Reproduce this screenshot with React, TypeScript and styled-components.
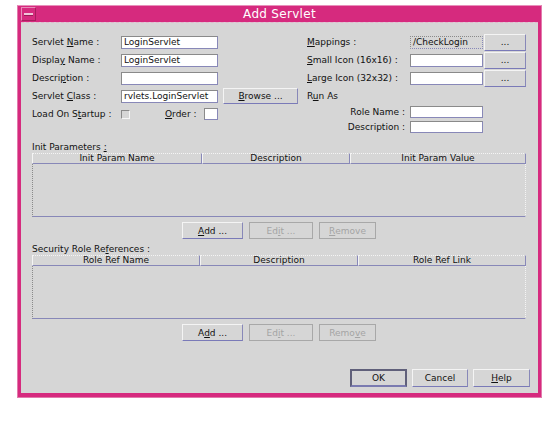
import React from "react";
import styled, { createGlobalStyle } from "styled-components";

const GlobalStyle = createGlobalStyle`
  html, body {
    margin: 0;
    padding: 0;
    background: #ffffff;
  }
  body {
    font-family: "DejaVu Sans", "Liberation Sans", sans-serif;
    color: #111111;
  }
`;

const Page = styled.div`
  padding: 5px 0 0 17px;
`;

const Frame = styled.div`
  width: 525px;
  box-sizing: border-box;
  background: #d62a7e;
  border: 1px solid #e27aac;
  border-top-color: #e890bb;
  padding: 0 3px 4px 3px;
`;

const TitleBar = styled.div`
  height: 16px;
  display: grid;
  grid-template-columns: 15px 1fr 15px;
  align-items: center;
`;

const MenuButton = styled.div`
  width: 15px;
  height: 14px;
  box-sizing: border-box;
  border: 1px solid #e88ab8;
  border-right-color: #a81e5e;
  border-bottom-color: #a81e5e;
  display: flex;
  align-items: center;
  justify-content: center;
  &::after {
    content: "";
    width: 9px;
    height: 2px;
    background: #f2c4da;
    border-bottom: 1px solid #9a1c56;
  }
`;

const Title = styled.div`
  text-align: center;
  color: #ffffff;
  font-size: 12px;
  line-height: 16px;
  letter-spacing: 0.3px;
`;

const Body = styled.div`
  height: 371px;
  box-sizing: border-box;
  background: #d6d6d6;
  border-top: 1px dashed #e4b6cc;
  padding: 10px 12px 0 11px;
  display: flex;
  flex-direction: column;
  font-size: 9px;
`;

const Top = styled.div`
  display: flex;
  gap: 9px;
`;

const Column = styled.div<{ $w: number }>`
  width: ${(p) => p.$w}px;
  display: flex;
  flex-direction: column;
`;

const Row = styled.div<{ $h?: number }>`
  height: ${(p) => p.$h ?? 18}px;
  display: flex;
  align-items: center;
`;

const Label = styled.span<{ $w?: number; $right?: boolean }>`
  width: ${(p) => (p.$w ? `${p.$w}px` : "auto")};
  flex-shrink: 0;
  text-align: ${(p) => (p.$right ? "right" : "left")};
  padding-right: ${(p) => (p.$right ? "5px" : "0")};
  box-sizing: border-box;
  white-space: nowrap;
  line-height: 12px;
`;

const Mn = styled.u`
  text-decoration: underline;
  text-underline-offset: 1px;
`;

const Field = styled.div<{ $w: number; $h?: number; $readOnly?: boolean }>`
  width: ${(p) => p.$w}px;
  height: ${(p) => p.$h ?? 13}px;
  box-sizing: border-box;
  flex-shrink: 0;
  background: ${(p) => (p.$readOnly ? "#d6d6d6" : "#ffffff")};
  border: 1px ${(p) => (p.$readOnly ? "dotted" : "solid")} #8888b8;
  border-top-color: #8a8a8a;
  border-left-color: #8a8a8a;
  padding-left: 2px;
  font-size: 9px;
  line-height: 11px;
  white-space: nowrap;
  overflow: hidden;
`;

const CheckBox = styled.div`
  width: 9px;
  height: 9px;
  box-sizing: border-box;
  border: 1px solid #f6f6f6;
  border-top-color: #8a8a8a;
  border-left-color: #8a8a8a;
  background: #d6d6d6;
  flex-shrink: 0;
`;

const Button = styled.div<{
  $w: number;
  $h?: number;
  $disabled?: boolean;
  $default?: boolean;
}>`
  width: ${(p) => p.$w}px;
  height: ${(p) => p.$h ?? 17}px;
  box-sizing: border-box;
  flex-shrink: 0;
  display: flex;
  align-items: center;
  justify-content: center;
  background: #d6d6d6;
  font-size: 9px;
  color: ${(p) => (p.$disabled ? "#a4a4a4" : "#111111")};
  border: ${(p) => (p.$default ? "2px" : "1px")} solid;
  border-color: ${(p) =>
    p.$disabled
      ? "#a8a8a8"
      : p.$default
      ? "#60607a #60607a #7a7ab0 #60607a"
      : "#f4f4f4 #8888b8 #7a7ab8 #f4f4f4"};
  white-space: nowrap;
`;

const SectionLabel = styled.div<{ $mt: number }>`
  margin-top: ${(p) => p.$mt}px;
  height: 12px;
  line-height: 12px;
`;

const Table = styled.div`
  display: flex;
  flex-direction: column;
`;

const HeaderRow = styled.div<{ $cols: string }>`
  display: grid;
  grid-template-columns: ${(p) => p.$cols};
  height: 11px;
`;

const HeaderCell = styled.div`
  box-sizing: border-box;
  border: 1px solid #8888b8;
  border-top: 1px dotted #f4f4f4;
  border-left-color: #f4f4f4;
  text-align: center;
  font-size: 9px;
  line-height: 9px;
  white-space: nowrap;
  overflow: hidden;
`;

const TableBody = styled.div`
  height: 53px;
  box-sizing: border-box;
  border-left: 1px dotted #8a8a8a;
  border-right: 1px dotted #f4f4f4;
  border-bottom: 1px solid #8888b8;
`;

const ButtonRow = styled.div<{ $mt: number; $end?: boolean }>`
  margin-top: ${(p) => p.$mt}px;
  display: flex;
  justify-content: ${(p) => (p.$end ? "flex-end" : "center")};
  gap: ${(p) => (p.$end ? 5 : 6)}px;
  margin-right: ${(p) => (p.$end ? -4 : 0)}px;
`;

type Col = { title: React.ReactNode };

function ListSection({
  label,
  cols,
  columns,
  labelTop,
  add,
  edit,
  remove,
}: {
  label: React.ReactNode;
  cols: string;
  columns: Col[];
  labelTop: number;
  add: React.ReactNode;
  edit: React.ReactNode;
  remove: React.ReactNode;
}) {
  return (
    <>
      <SectionLabel $mt={labelTop}>{label}</SectionLabel>
      <Table>
        <HeaderRow $cols={cols}>
          {columns.map((c, i) => (
            <HeaderCell key={i}>{c.title}</HeaderCell>
          ))}
        </HeaderRow>
        <TableBody />
      </Table>
      <ButtonRow $mt={5}>
        <Button $w={61}>{add}</Button>
        <Button $w={64} $disabled>
          {edit}
        </Button>
        <Button $w={57} $disabled>
          {remove}
        </Button>
      </ButtonRow>
    </>
  );
}

export default function App() {
  return (
    <Page>
      <GlobalStyle />
      <Frame>
        <TitleBar>
          <MenuButton />
          <Title>Add Servlet</Title>
          <span />
        </TitleBar>
        <Body>
          <Top>
            <Column $w={266}>
              <Row>
                <Label $w={89}>
                  Servlet <Mn>N</Mn>ame :
                </Label>
                <Field $w={97}>LoginServlet</Field>
              </Row>
              <Row>
                <Label $w={89}>
                  Displa<Mn>y</Mn> Name :
                </Label>
                <Field $w={97}>LoginServlet</Field>
              </Row>
              <Row>
                <Label $w={89}>
                  Descri<Mn>p</Mn>tion :
                </Label>
                <Field $w={97} />
              </Row>
              <Row>
                <Label $w={89}>
                  Servlet <Mn>C</Mn>lass :
                </Label>
                <Field $w={97}>rvlets.LoginServlet</Field>
                <Button $w={75} $h={16} style={{ marginLeft: 5 }}>
                  <Mn>B</Mn>rowse ...
                </Button>
              </Row>
              <Row>
                <Label $w={89}>
                  Load On S<Mn>t</Mn>artup :
                </Label>
                <CheckBox />
                <Label $w={39} style={{ marginLeft: 35 }}>
                  <Mn>O</Mn>rder :
                </Label>
                <Field $w={14} $h={12} />
              </Row>
            </Column>
            <Column $w={219}>
              <Row>
                <Label $w={103}>
                  <Mn>M</Mn>appings :
                </Label>
                <Field $w={73} $readOnly>
                  /CheckLogin
                </Field>
                <Button $w={42} style={{ marginLeft: 1 }}>
                  ...
                </Button>
              </Row>
              <Row>
                <Label $w={103}>
                  <Mn>S</Mn>mall Icon (16x16) :
                </Label>
                <Field $w={73} />
                <Button $w={42} style={{ marginLeft: 1 }}>
                  ...
                </Button>
              </Row>
              <Row>
                <Label $w={103}>
                  <Mn>L</Mn>arge Icon (32x32) :
                </Label>
                <Field $w={73} />
                <Button $w={42} style={{ marginLeft: 1 }}>
                  ...
                </Button>
              </Row>
              <Row $h={17}>
                <Label>
                  R<Mn>u</Mn>n As
                </Label>
              </Row>
              <Row $h={15}>
                <Label $w={103} $right>
                  Role Name :
                </Label>
                <Field $w={73} $h={12} />
              </Row>
              <Row $h={15}>
                <Label $w={103} $right>
                  Description :
                </Label>
                <Field $w={73} $h={12} />
              </Row>
            </Column>
          </Top>

          <ListSection
            labelTop={7}
            label={
              <>
                Init Parameters <Mn>:</Mn>
              </>
            }
            cols="170px 148px 176px"
            columns={[
              { title: "Init Param Name" },
              { title: "Description" },
              { title: "Init Param Value" },
            ]}
            add={
              <>
                <Mn>A</Mn>dd ...
              </>
            }
            edit={
              <>
                Ed<Mn>i</Mn>t ...
              </>
            }
            remove={
              <>
                <Mn>R</Mn>emove
              </>
            }
          />

          <ListSection
            labelTop={4}
            label={
              <>
                Security Role Re<Mn>f</Mn>erences :
              </>
            }
            cols="168px 158px 168px"
            columns={[
              { title: "Role Ref Name" },
              { title: "Description" },
              { title: "Role Ref Link" },
            ]}
            add={
              <>
                A<Mn>d</Mn>d ...
              </>
            }
            edit={
              <>
                Ed<Mn>i</Mn>t ...
              </>
            }
            remove={
              <>
                Remo<Mn>v</Mn>e
              </>
            }
          />

          <ButtonRow $mt={28} $end>
            <Button $w={57} $h={18} $default>
              OK
            </Button>
            <Button $w={56} $h={18}>
              Cancel
            </Button>
            <Button $w={57} $h={18}>
              <Mn>H</Mn>elp
            </Button>
          </ButtonRow>
        </Body>
      </Frame>
    </Page>
  );
}
